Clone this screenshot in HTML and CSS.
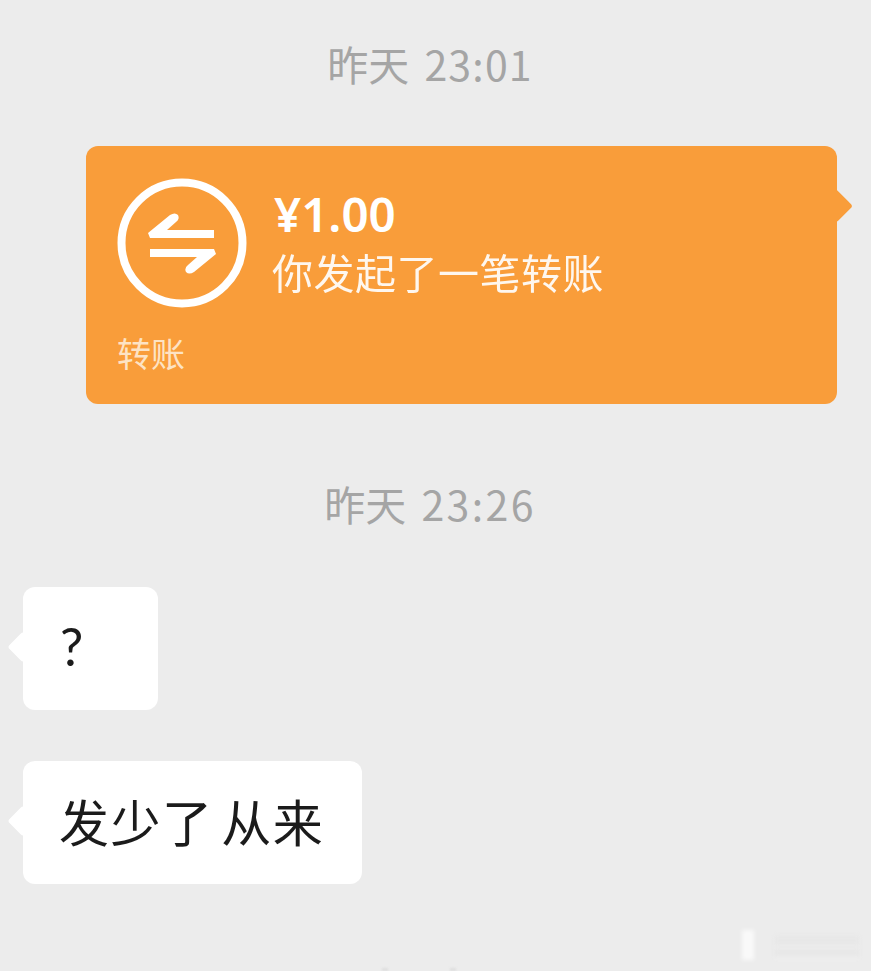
FILE: index.html
```html
<!DOCTYPE html>
<html lang="zh-cmn-Hans">
	<head>
		<meta charset="utf-8">
		<title>聊天</title>
		<link rel="stylesheet" href="styles.css">
	</head>
	<body>
		<div class="chat">
			<div class="time time-first">昨天 <span>23:01</span></div>
			<div class="row row-right">
				<div class="transfer">
					<div class="transfer-main">
						<svg class="transfer-icon" viewBox="0 0 130 130">
							<circle cx="65" cy="65" r="60.5" fill="none" stroke="#fff" stroke-width="8"/>
							<path d="M31 55L53 37Q58 34 61 37Q63 41 59 44L50 52H97V60H33Z" fill="#fff"/>
							<path d="M99 76L77 94Q72 97 69 94Q67 90 71 87L80 79H33V71H97Z" fill="#fff"/>
						</svg>
						<div class="transfer-text">
							<div class="amount">¥1.00</div>
							<div class="desc">你发起了一笔转账</div>
						</div>
					</div>
					<div class="transfer-label">转账</div>
				</div>
			</div>
			<div class="time time-second">昨天 <span>23:26</span></div>
			<div class="row">
				<div class="bubble bubble-short">?</div>
			</div>
			<div class="row row-gap">
				<div class="bubble">发少了 从来</div>
			</div>
		</div>
		<svg class="mark" viewBox="0 0 120 34">
			<rect x="1" y="2" width="12" height="30" fill="#fff" opacity=".7"/>
			<path d="M34 8H118V30H34Z" fill="#ddd" opacity=".3"/>
			<path d="M34 19H118M34 30H118" stroke="#fff" stroke-width="2" opacity=".4"/>
		</svg>
		<div class="edge"><i></i><i></i></div>
	</body>
</html>
```
FILE: styles.css
```css
html{ background: #ececec; }
body{ margin: 0; height: 971px; overflow: hidden; position: relative; font-family: "Noto Sans CJK SC", sans-serif; }
.chat{ padding: 0 34px 0 23px; }
.time{ text-align: center; color: #a5a5a5; font-size: 41px; line-height: 50px; word-spacing: 6px; }
.time-first{ padding-top: 38px; margin-bottom: 58px; }
.time-first span{ letter-spacing: 1.2px; }
.time-second{ margin-top: 74px; margin-bottom: 59px; }
.time-second span{ letter-spacing: 2.4px; }
.row{ display: flex; }
.row-right{ justify-content: flex-end; }
.row-gap{ margin-top: 51px; }

.transfer{ position: relative; width: 751px; height: 258px; box-sizing: border-box; padding: 32px 31px 0; background: #f99d3a; border-radius: 12px; color: #fff; }
.transfer:after{ content: ""; position: absolute; right: -11px; top: 48px; width: 24px; height: 24px; background: #f99d3a; border-radius: 3px; transform: rotate(45deg); }
.transfer-main{ display: flex; gap: 27px; }
.transfer-icon{ display: block; width: 130px; height: 130px; flex: none; }
.amount{ font-size: 47.5px; line-height: 52px; font-weight: 600; margin-top: 10px; font-family: "Noto Sans", sans-serif; }
.desc{ font-size: 41px; line-height: 58px; margin-left: -2px; letter-spacing: .5px; opacity: .92; margin-top: 2px; }
.transfer-label{ margin-top: 22px; font-size: 34px; line-height: 46px; color: #fde3c4; }

.bubble{ position: relative; height: 123px; box-sizing: border-box; padding: 0 38px 0 36px; background: #fff; border-radius: 12px; color: #1b1b1b; font-size: 50px; line-height: 119px; letter-spacing: 1.5px; word-spacing: -5px; }
.bubble:after{ content: ""; position: absolute; left: -11px; top: 49px; width: 22px; height: 22px; background: #fff; border-radius: 3px; transform: rotate(45deg); }
.bubble-short{ width: 135px; font-family: "Lato", sans-serif; font-size: 52px; padding-left: 37px; }

.mark{ position: absolute; right: 10px; bottom: 9px; width: 120px; height: 34px; filter: blur(2px); }
.edge{ position: absolute; left: 382px; bottom: 0; width: 74px; display: flex; justify-content: space-between; }
.edge i{ display: block; width: 6px; height: 3px; background: #dedede; filter: blur(1px); }
```
